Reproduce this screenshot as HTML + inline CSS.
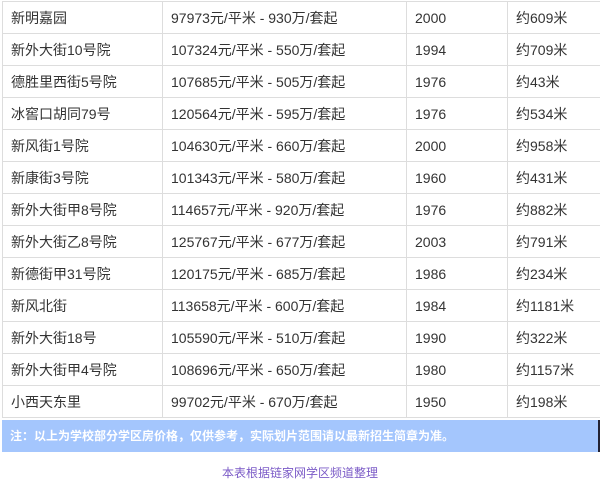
<!DOCTYPE html>
<html><head><meta charset="utf-8"><style>
body{margin:0;width:600px;height:480px;background:#fff;font-family:"Liberation Sans","Noto Sans CJK SC",sans-serif;overflow:hidden}
table{position:absolute;left:2px;top:1px;border-collapse:collapse;width:600px;font-size:14px;color:#333}
td{border:1px solid #ddd;height:32px;padding:0 0 0 8px;box-sizing:border-box;line-height:16px}
td:nth-child(1){width:160px}td:nth-child(2){width:244px}td:nth-child(3){width:101px}
.note{position:absolute;left:2px;top:420px;width:598px;height:32px;background:#a4c6fd;border-right:2px solid #223;color:#fff;font-size:12px;font-weight:bold;line-height:32px;padding-left:8px;box-sizing:border-box}
.foot{position:absolute;top:464px;left:0;width:600px;text-align:center;font-size:12px;color:#7b5bc7}
</style></head><body>
<table>
<tr><td>新明嘉园</td><td>97973元/平米 - 930万/套起</td><td>2000</td><td>约609米</td></tr>
<tr><td>新外大街10号院</td><td>107324元/平米 - 550万/套起</td><td>1994</td><td>约709米</td></tr>
<tr><td>德胜里西街5号院</td><td>107685元/平米 - 505万/套起</td><td>1976</td><td>约43米</td></tr>
<tr><td>冰窖口胡同79号</td><td>120564元/平米 - 595万/套起</td><td>1976</td><td>约534米</td></tr>
<tr><td>新风街1号院</td><td>104630元/平米 - 660万/套起</td><td>2000</td><td>约958米</td></tr>
<tr><td>新康街3号院</td><td>101343元/平米 - 580万/套起</td><td>1960</td><td>约431米</td></tr>
<tr><td>新外大街甲8号院</td><td>114657元/平米 - 920万/套起</td><td>1976</td><td>约882米</td></tr>
<tr><td>新外大街乙8号院</td><td>125767元/平米 - 677万/套起</td><td>2003</td><td>约791米</td></tr>
<tr><td>新德街甲31号院</td><td>120175元/平米 - 685万/套起</td><td>1986</td><td>约234米</td></tr>
<tr><td>新风北街</td><td>113658元/平米 - 600万/套起</td><td>1984</td><td>约1181米</td></tr>
<tr><td>新外大街18号</td><td>105590元/平米 - 510万/套起</td><td>1990</td><td>约322米</td></tr>
<tr><td>新外大街甲4号院</td><td>108696元/平米 - 650万/套起</td><td>1980</td><td>约1157米</td></tr>
<tr><td>小西天东里</td><td>99702元/平米 - 670万/套起</td><td>1950</td><td>约198米</td></tr>
</table>
<div class="note">注：以上为学校部分学区房价格，仅供参考，实际划片范围请以最新招生简章为准。</div>
<div class="foot">本表根据链家网学区频道整理</div>
</body></html>
